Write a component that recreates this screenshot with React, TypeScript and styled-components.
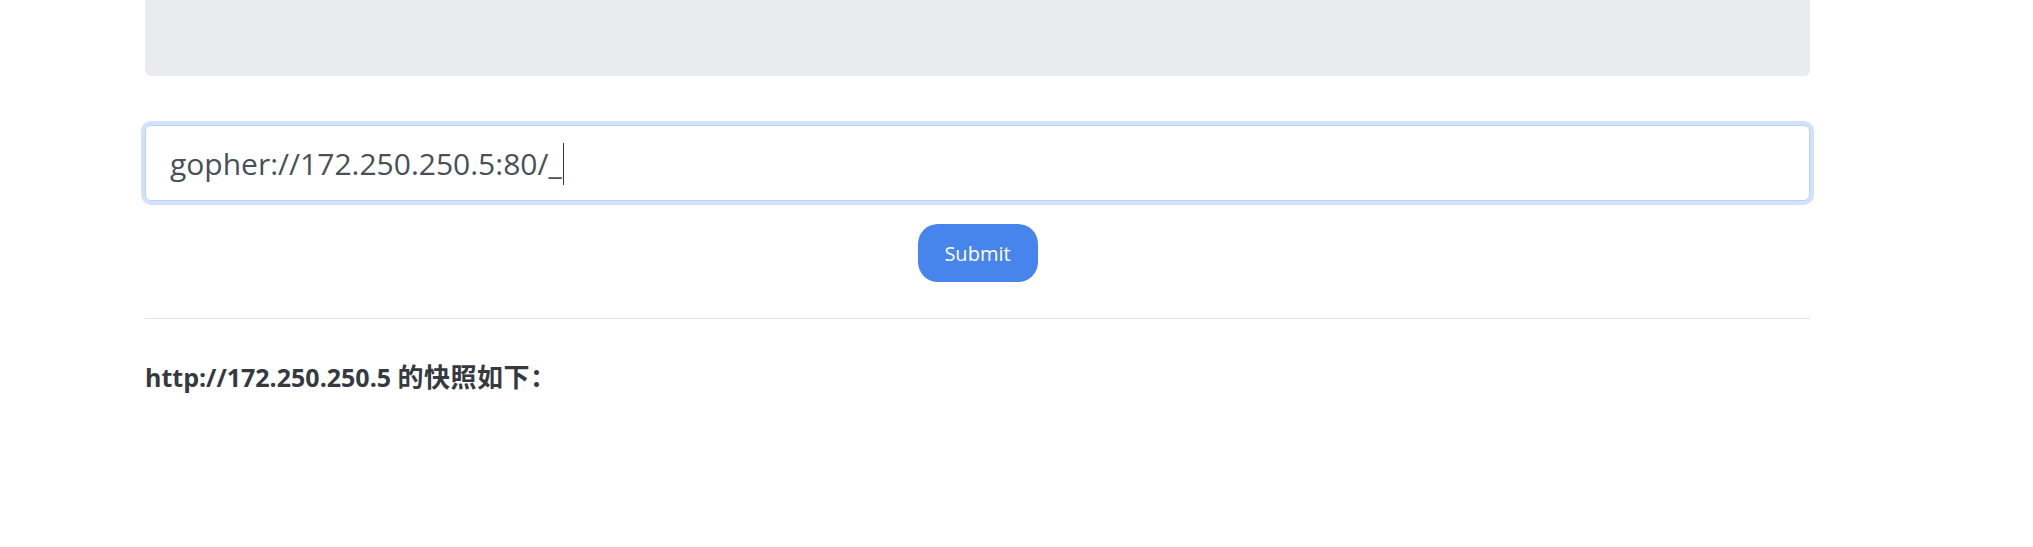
import React from "react";
import styled, { createGlobalStyle } from "styled-components";

const GlobalStyle = createGlobalStyle`
  html, body {
    margin: 0;
    padding: 0;
    background: #ffffff;
  }
  body {
    font-family: "Open Sans", "Noto Sans", "Noto Sans CJK SC", sans-serif;
    color: #343a40;
  }
`;

const Page = styled.div`
  width: 1665px;
  margin-left: 145px;
  display: flex;
  flex-direction: column;
`;

const Jumbotron = styled.div`
  height: 76px;
  background: #e9ecef;
  border-radius: 0 0 6px 6px;
`;

const Form = styled.form`
  margin-top: 49px;
  display: flex;
  flex-direction: column;
  align-items: center;
  gap: 23px;
`;

const Field = styled.div`
  box-sizing: border-box;
  width: 100%;
  height: 76px;
  border: 1.5px solid #bdd3f6;
  border-radius: 6px;
  box-shadow: 0 0 0 4px #d3e2fa;
  background: #ffffff;
  padding: 0 24px;
  display: flex;
  align-items: center;
  font-family: "Open Sans", "Noto Sans", sans-serif;
  font-size: 30px;
  color: #495057;
  white-space: pre;
`;

const Caret = styled.span`
  display: inline-block;
  width: 1.5px;
  height: 42px;
  background: #333;
  margin-left: 1px;
  transform: translateY(1px);
`;

const SubmitButton = styled.button`
  box-sizing: border-box;
  width: 120px;
  height: 58px;
  border: none;
  border-radius: 20px;
  background: #4784ec;
  color: #ffffff;
  font-family: "Open Sans", "Noto Sans", sans-serif;
  font-size: 20px;
  padding: 0;
  cursor: pointer;
`;

const Divider = styled.hr`
  margin: 36px 0 0;
  border: 0;
  border-top: 1px solid #e3e3e3;
  height: 0;
`;

const Result = styled.h5`
  margin: 42px 0 0;
  font-family: "Open Sans", "Noto Sans CJK SC", sans-serif;
  font-weight: 700;
  font-size: 25px;
  line-height: 33px;
  color: #343a40;
`;

const Cjk = styled.span`
  font-size: 26px;
  letter-spacing: 0.5px;
`;

export default function App() {
  return (
    <>
      <GlobalStyle />
      <Page>
        <Jumbotron />
        <Form onSubmit={(e) => e.preventDefault()}>
          <Field>
            gopher://172.250.250.5:80/_
            <Caret />
          </Field>
          <SubmitButton type="submit">Submit</SubmitButton>
        </Form>
        <Divider />
        <Result>
          http://172.250.250.5 <Cjk>的快照如下：</Cjk>
        </Result>
      </Page>
    </>
  );
}
